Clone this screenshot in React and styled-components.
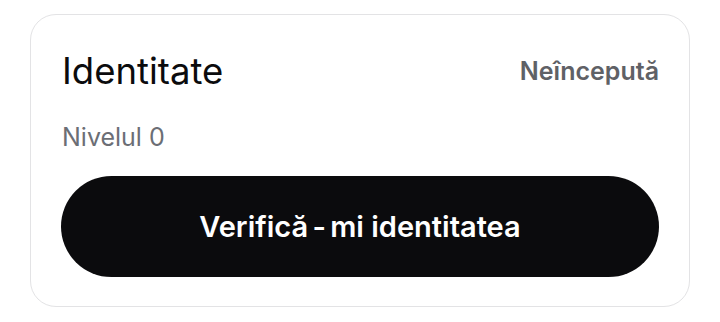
import React from 'react';
import styled, { createGlobalStyle } from 'styled-components';

const GlobalStyle = createGlobalStyle`
  body {
    margin: 0;
    background: #ffffff;
    font-family: Inter, "Noto Sans", sans-serif;
  }
`;

export default function App() {
  return (
    <>
      <GlobalStyle />
      <Page>
        <Card>
          <Header>
            <Title>Identitate</Title>
            <Status>Neîncepută</Status>
          </Header>
          <Level>Nivelul 0</Level>
          <Button>
            <Tight>Verifică - mi</Tight> identitatea
          </Button>
        </Card>
      </Page>
    </>
  );
}

const Page = styled.div`
  padding: 14px 30px;
`;

const Card = styled.div`
  box-sizing: border-box;
  width: 660px;
  border: 1.5px solid #e3e3e5;
  border-radius: 26px;
  padding: 36px 30px 29px;
  display: flex;
  flex-direction: column;
`;

const Header = styled.div`
  display: flex;
  justify-content: space-between;
  align-items: center;
  padding-left: 1px;
`;

const Title = styled.h1`
  margin: 0;
  font-size: 36.5px;
  font-weight: 400;
  line-height: 40px;
  color: #0b0b0d;
`;

const Status = styled.span`
  font-size: 25px;
  font-weight: 600;
  color: #5f6166;
`;

const Level = styled.div`
  margin-top: 31px;
  padding-left: 1px;
  font-size: 25px;
  line-height: 30px;
  color: #6b6e75;
`;

const Button = styled.button`
  margin-top: 24px;
  height: 101px;
  border: none;
  border-radius: 999px;
  background: #0b0b0d;
  color: #ffffff;
  font-family: Inter, "Noto Sans", sans-serif;
  font-size: 29px;
  font-weight: 600;
`;

const Tight = styled.span`
  word-spacing: -3px;
`;
